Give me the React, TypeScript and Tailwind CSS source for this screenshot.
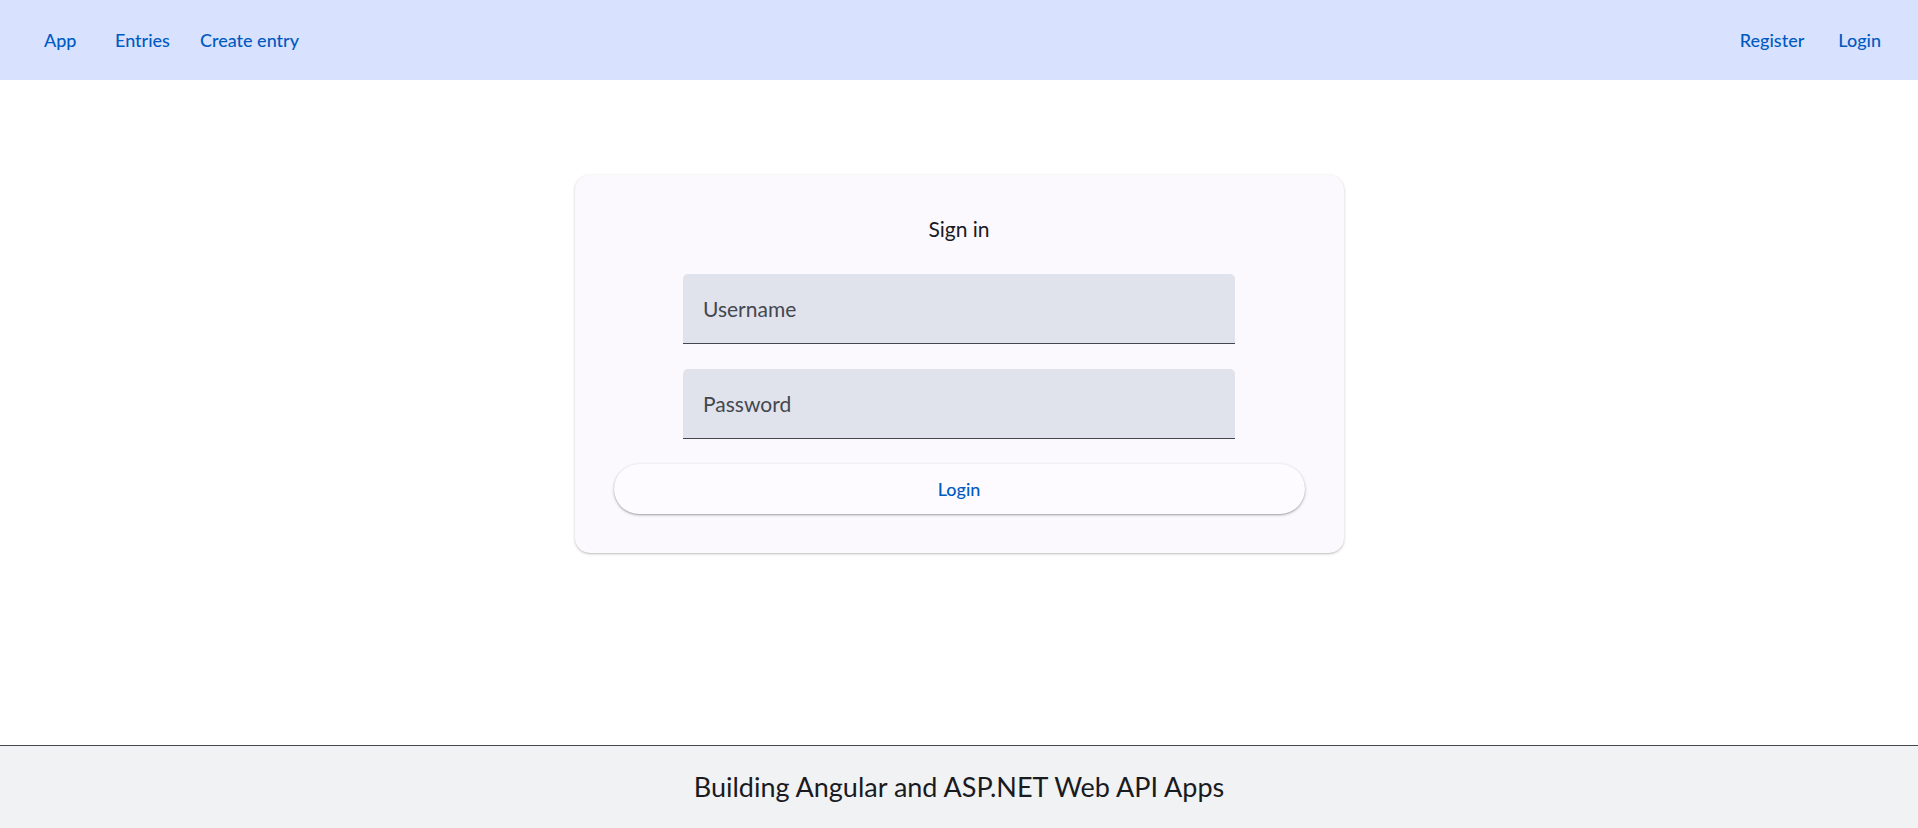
import React from "react";

export default function App() {
  return (
    <div
      className="flex min-h-[828px] flex-col bg-white text-[#1a1b1f]"
      style={{ fontFamily: "Lato, 'Noto Sans', sans-serif" }}
    >
      <nav className="flex h-[80px] items-center justify-between bg-[#d8e2ff] pl-[44px] pr-[37px]">
        <div className="flex items-center gap-[30px] text-[18px] font-medium text-[#005ac1]">
          <a className="w-[32px]">App</a>
          <a className="ml-[9px]">Entries</a>
          <a>Create entry</a>
        </div>
        <div className="flex items-center gap-[34px] text-[18px] font-medium text-[#005ac1]">
          <a>Register</a>
          <a>Login</a>
        </div>
      </nav>

      <main className="flex flex-1 justify-center pt-[95px]">
        <div className="flex h-[378px] w-[769px] flex-col items-center rounded-[15px] bg-[#fbf8fe] px-[39px] pt-[40px] shadow-[0_1px_3px_rgba(0,0,0,0.22),0_1px_1px_rgba(0,0,0,0.06)]">
          <h1 className="h-[28px] text-[21px] leading-[28px] text-[#1a1b1f]">Sign in</h1>
          <div className="mt-[31px] flex h-[70px] w-[552px] items-center rounded-t-[5px] border-b border-[#44474e] bg-[#e0e2ec] px-[20px]">
            <span className="text-[21px] text-[#44474e]">Username</span>
          </div>
          <div className="mt-[25px] flex h-[70px] w-[552px] items-center rounded-t-[5px] border-b border-[#44474e] bg-[#e0e2ec] px-[20px]">
            <span className="text-[21px] text-[#44474e]">Password</span>
          </div>
          <button className="mt-[25px] flex h-[50px] w-full items-center justify-center rounded-full bg-[#fdfbff] text-[18px] font-medium text-[#005ac1] shadow-[0_1px_3px_rgba(0,0,0,0.3),0_1px_1px_rgba(0,0,0,0.1)]">
            Login
          </button>
        </div>
      </main>

      <footer className="flex h-[83px] items-center justify-center border-t border-[#44474e] bg-[#f1f2f4]">
        <span className="text-[27px] text-[#1a1b1f]">Building Angular and ASP.NET Web API Apps</span>
      </footer>
    </div>
  );
}
